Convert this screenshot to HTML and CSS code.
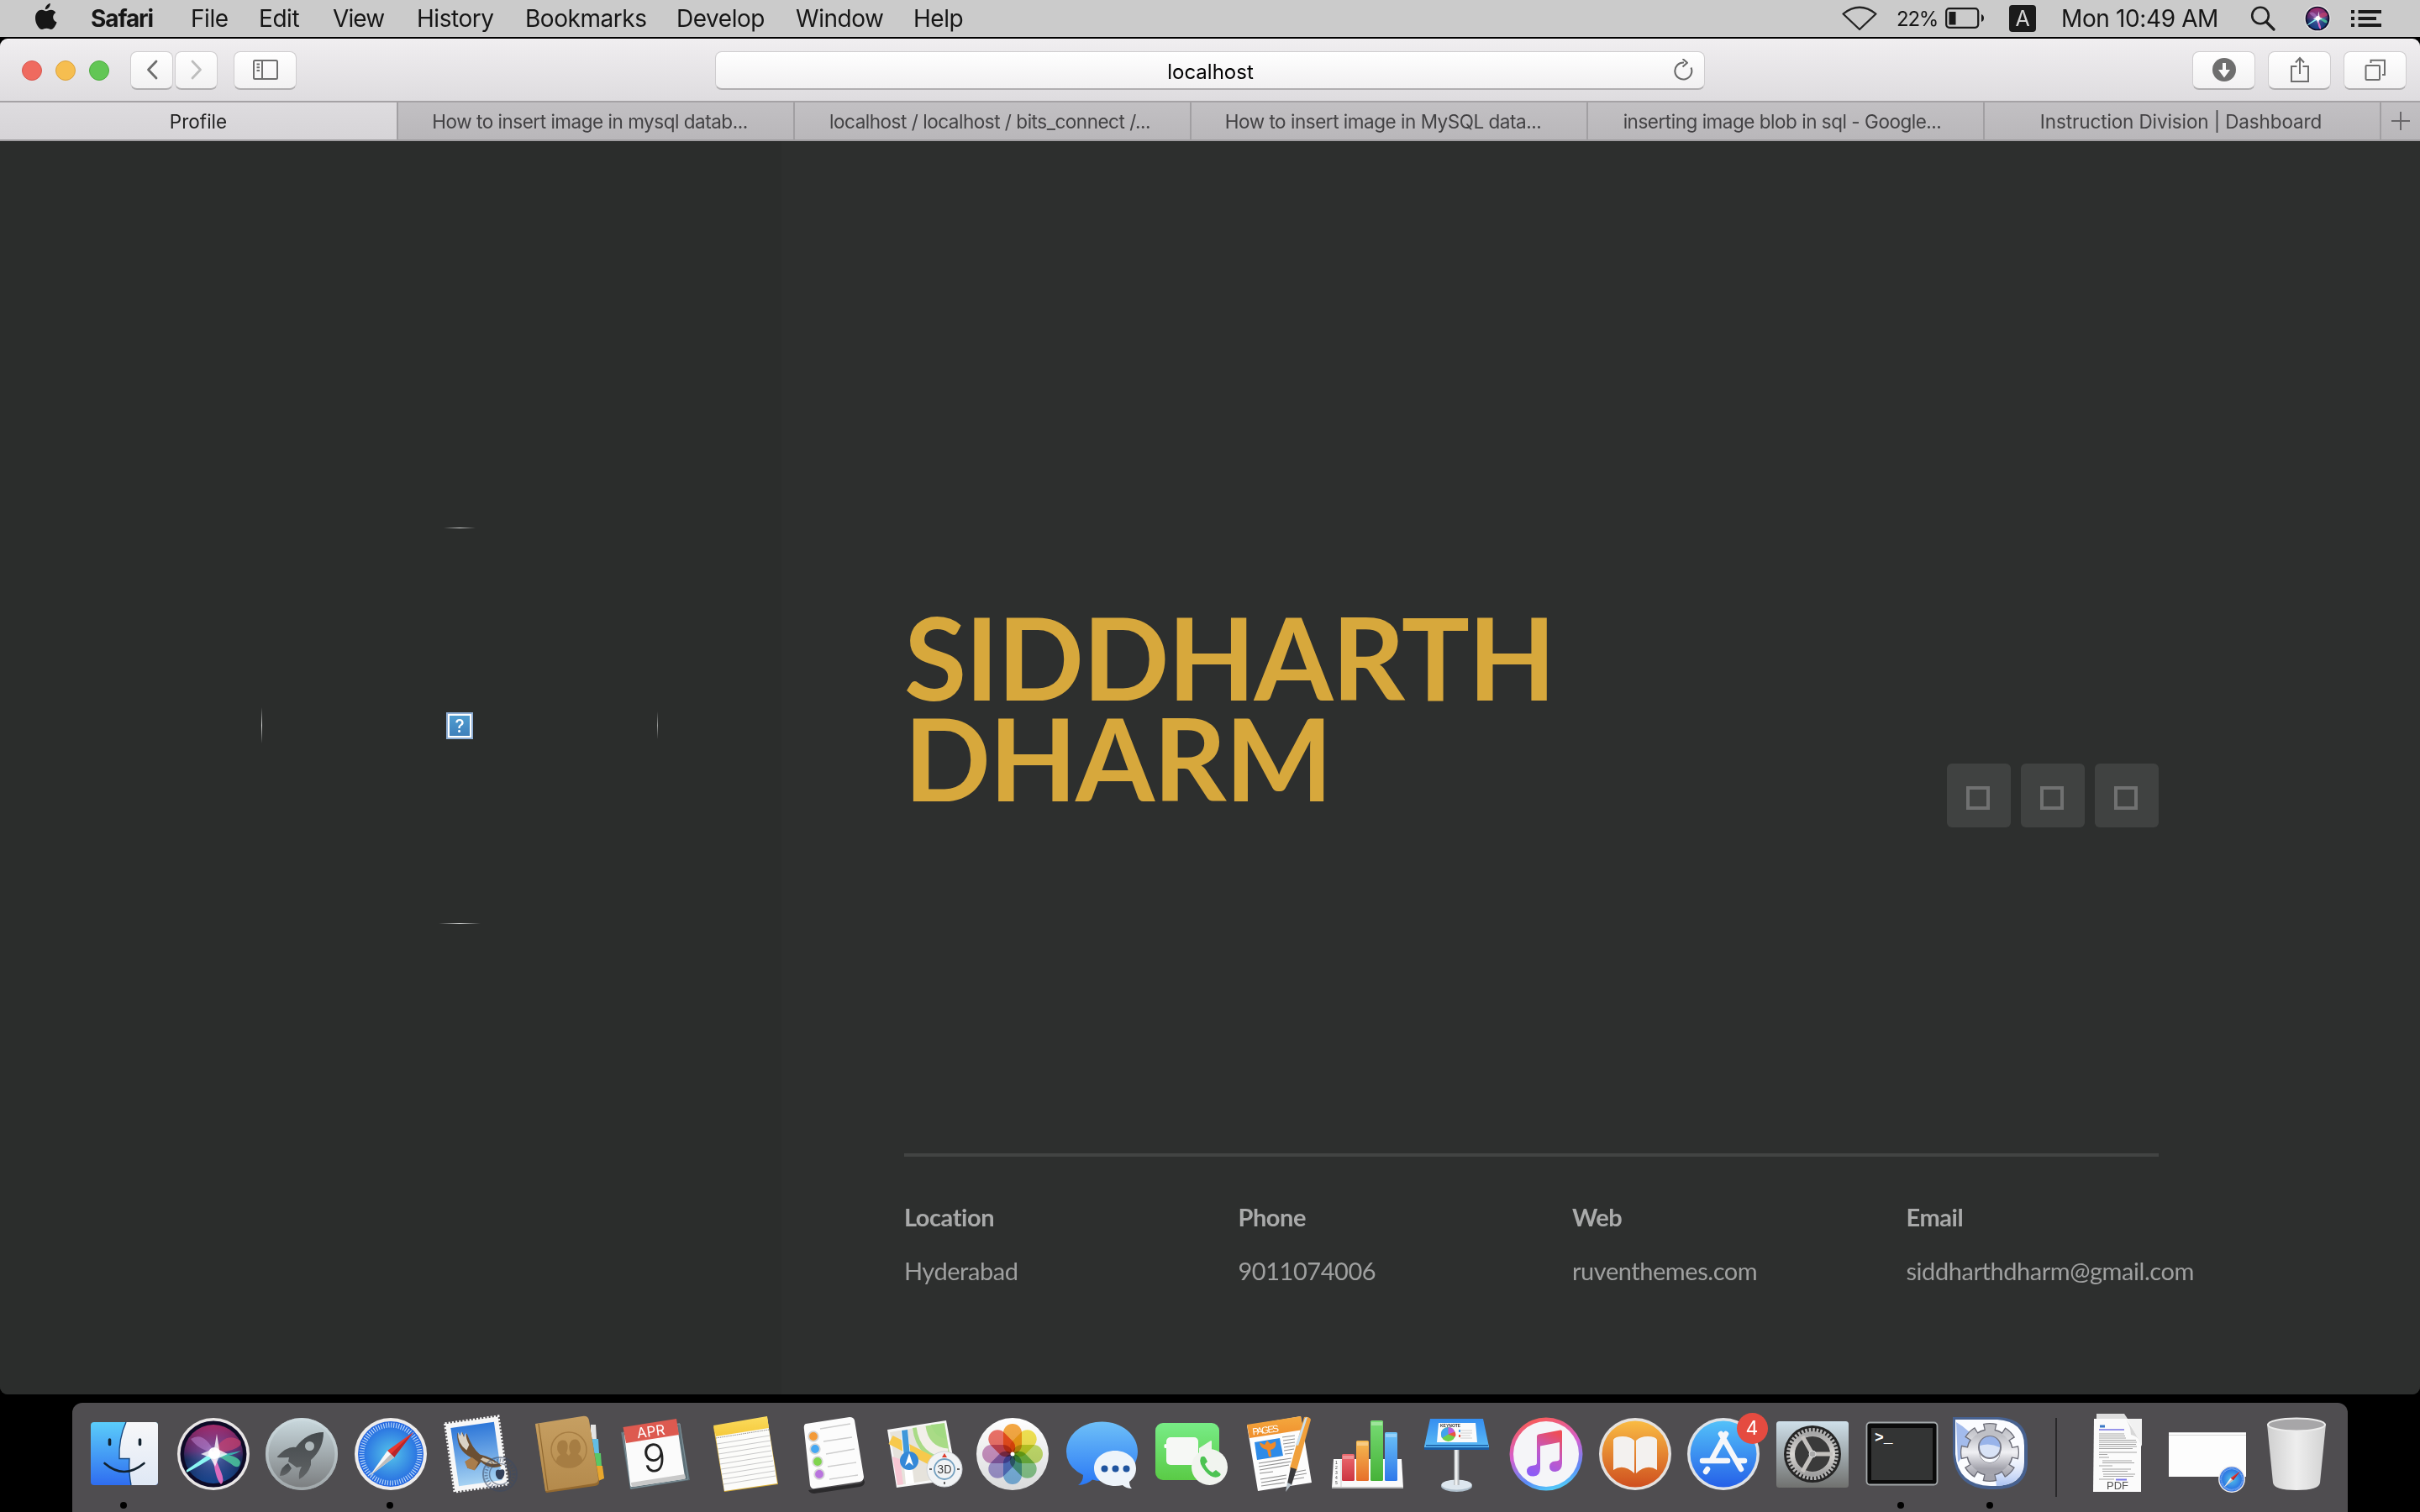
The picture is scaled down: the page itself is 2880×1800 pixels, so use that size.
FILE: index.html
```html
<!DOCTYPE html>
<html lang="en">
<head>
<meta charset="utf-8">
<title>Profile</title>
<link rel="stylesheet" href="styles.css">
</head>
<body>
<div class="desktop">
  <header class="menubar">
    <svg class="apple" width="26" height="32" viewBox="0 0 26 32"><path fill="#161616" d="M17.800 0C18 3.200 15.600 7 11.900 7.300 11.500 4.200 14.500.5 17.800 0zM12.900 9.300C14.200 9.300 16 7.700 18.800 7.700c1.900 0 4.100 1 5.500 3.200-4.600 2.700-4 9.500 1.300 11.600C24.300 26.200 21.600 31 18.800 31c-2 0-2.800-1.200-5.400-1.200S9.800 31 8 31C4.500 31 0 24 0 17.400 0 11 3.900 7.800 7.600 7.800c2.300 0 4 1.500 5.300 1.500z"/></svg>
    <nav class="menus">
      <span class="menu menu-app">Safari</span><span class="menu w-file">File</span><span class="menu w-edit">Edit</span><span class="menu w-view">View</span><span class="menu w-history">History</span><span class="menu w-bookmarks">Bookmarks</span><span class="menu w-develop">Develop</span><span class="menu w-window">Window</span><span class="menu w-help">Help</span>
    </nav>
    <div class="status">
      <svg class="st-wifi" width="42" height="30" viewBox="0 0 42 30" fill="none" stroke="#222" stroke-width="2.200" stroke-linejoin="round"><path d="M1.500 9.500Q21-6 40.500 9.500L21 28z"/></svg>
      <span class="st-pct">22%</span>
      <svg class="st-batt" width="47" height="26" viewBox="0 0 47 26"><rect x="1.200" y="1.200" width="38" height="22.600" rx="3.500" fill="none" stroke="#1a1a1a" stroke-width="2.200"/><rect x="4.500" y="5" width="8" height="15.500" fill="#1a1a1a"/><path d="M43 8q3 1 3 4.500T43 17z" fill="#1a1a1a"/></svg>
      <span class="st-input">A</span>
      <span class="st-clock">Mon 10:49 AM</span>
      <svg class="st-search" width="30" height="30" viewBox="0 0 30 30" fill="none" stroke="#1e1e1e" stroke-width="2.600" stroke-linecap="round"><circle cx="12" cy="11.500" r="9.800"/><path d="M19 19l9 9" stroke-width="3.200"/></svg>
      <svg class="st-siri" width="32" height="32" viewBox="6 6 88 88"><use href="#siri"/></svg>
      <svg class="st-list" width="36" height="22" viewBox="0 0 36 22" fill="#1a1a1a"><path d="M0 1h4v4H0zM0 9h4v4H0zM0 17h4v4H0zM8.500 1H36v4H8.500zM8.500 9H30v4H8.500zM8.500 17H36v4H8.500z"/></svg>
    </div>
  </header>

  <main class="window">
    <div class="toolbar">
      <div class="lights"><i class="light red"></i><i class="light yellow"></i><i class="light green"></i></div>
      <div class="navbtns">
        <button class="btn narrow"><svg width="14" height="24" viewBox="0 0 14 24" fill="none" stroke="#6e6e6e" stroke-width="2.800" stroke-linecap="round" stroke-linejoin="round"><path d="M12 2L2.500 12 12 22"/></svg></button>
        <button class="btn narrow"><svg width="14" height="24" viewBox="0 0 14 24" fill="none" stroke="#bdbdbd" stroke-width="2.800" stroke-linecap="round" stroke-linejoin="round"><path d="M2 2l9.500 10L2 22"/></svg></button>
      </div>
      <button class="btn"><svg width="30" height="24" viewBox="0 0 30 24" fill="none" stroke="#6e6e6e" stroke-width="2"><rect x="1" y="1" width="28" height="22" rx="1.500"/><path d="M11 1v22M4.500 5.500H8M4.500 9.200H8M4.500 13H8"/></svg></button>
      <div class="address"><span class="address-text">localhost</span>
        <svg class="reload" width="24" height="26" viewBox="0 0 24 26" fill="none" stroke="#6a6a6a" stroke-width="2.100"><path d="M21.500 10.500A10 10 0 1 1 13 4.500"/><path d="M11.500 0l5.500 4.700-5.500 4.800" stroke-linejoin="round"/></svg>
      </div>
      <div class="actions">
        <button class="btn"><svg width="28" height="28" viewBox="0 0 28 28"><circle cx="14" cy="14" r="14" fill="#6e6e6e"/><path d="M12 6h4v8h5l-7 9.500L7 14h5z" fill="#fafafa"/></svg></button>
        <button class="btn"><svg width="24" height="32" viewBox="0 0 24 32" fill="none" stroke="#6e6e6e" stroke-width="2"><path d="M8.500 12H2v18h20V12h-6.500M12 21V3M7 7.500L12 2l5 5.500"/></svg></button>
        <button class="btn"><svg width="26" height="26" viewBox="0 0 26 26" fill="none" stroke="#6e6e6e" stroke-width="2"><rect x="1.500" y="8" width="16.500" height="17" rx="1"/><path d="M7.500 5V1.800h16.500V19H21"/></svg></button>
      </div>
    </div>
    <div class="tabs">
      <div class="tab active"><span>Profile</span></div>
      <div class="tab cut shift-l"><span>How to insert image in mysql datab...</span></div>
      <div class="tab cut shift-s"><span>localhost / localhost / bits_connect /...</span></div>
      <div class="tab cut shift-l"><span>How to insert image in MySQL data...</span></div>
      <div class="tab cut shift-m"><span>inserting image blob in sql - Google...</span></div>
      <div class="tab full"><span>Instruction Division | Dashboard</span></div>
      <div class="newtab"><svg width="22" height="22" viewBox="0 0 22 22" stroke="#69676a" stroke-width="2"><path d="M11 0v22M0 11h22"/></svg></div>
    </div>
    <div class="page">
      <aside class="side">
        <svg class="photo" width="474" height="474" viewBox="0 0 474 474">
          <defs>
            <linearGradient id="fh"><stop offset="0" stop-color="#d4d6d5" stop-opacity="0"/><stop offset=".5" stop-color="#d4d6d5"/><stop offset="1" stop-color="#d4d6d5" stop-opacity="0"/></linearGradient>
            <linearGradient id="fv" x2="0" y2="1"><stop offset="0" stop-color="#d4d6d5" stop-opacity="0"/><stop offset=".5" stop-color="#d4d6d5"/><stop offset="1" stop-color="#d4d6d5" stop-opacity="0"/></linearGradient>
            <linearGradient id="qb" x2="0" y2="1"><stop stop-color="#4f9dd0"/><stop offset="1" stop-color="#3f80bb"/></linearGradient>
          </defs>
          <rect x="218" y="1" width="38" height="1" fill="url(#fh)"/>
          <rect x="212" y="472" width="50" height="1" fill="url(#fh)"/>
          <rect x="1" y="215" width="1" height="43" fill="url(#fv)"/>
          <rect x="472" y="220" width="1" height="33" fill="url(#fv)" opacity=".65"/>
          <rect x="221" y="221" width="32" height="32" fill="#8fafd6"/><rect x="223" y="223" width="28" height="28" fill="#fff"/><rect x="225" y="225" width="24" height="24" fill="url(#qb)"/>
          <text x="237" y="245" text-anchor="middle" class="qmark">?</text>
        </svg>
      </aside>
      <section class="profile">
        <div class="hero">
          <h1>SIDDHARTH<br>DHARM</h1>
          <div class="social"><a class="soc"><i></i></a><a class="soc"><i></i></a><a class="soc"><i></i></a></div>
        </div>
        <dl class="facts">
          <div><dt>Location</dt><dd>Hyderabad</dd></div>
          <div><dt>Phone</dt><dd>9011074006</dd></div>
          <div><dt>Web</dt><dd>ruventhemes.com</dd></div>
          <div><dt>Email</dt><dd>siddharthdharm@gmail.com</dd></div>
        </dl>
      </section>
    </div>
  </main>

  <footer class="dock">
    <svg class="defs" width="0" height="0">
      <defs>
        <linearGradient id="g-find" x2="0" y2="1"><stop stop-color="#5bcdfa"/><stop offset="1" stop-color="#2f6df0"/></linearGradient>
        <linearGradient id="g-white" x2="0" y2="1"><stop stop-color="#f7f7f9"/><stop offset="1" stop-color="#dfe8f5"/></linearGradient>
        <radialGradient id="g-siri" cx=".5" cy=".5" r=".5"><stop stop-color="#86c9ee"/><stop offset=".35" stop-color="#54508f"/><stop offset=".75" stop-color="#2b2658"/><stop offset="1" stop-color="#0c0b28"/></radialGradient>
        <linearGradient id="g-siri2" x2="0" y2="1"><stop stop-color="#e0357f"/><stop offset=".45" stop-color="#8b3b8f" stop-opacity=".7"/><stop offset=".6" stop-color="#1b5a9c" stop-opacity=".5"/><stop offset="1" stop-color="#1a5bb5"/></linearGradient>
        <linearGradient id="g-launch" x2="0" y2="1"><stop stop-color="#c7d6db"/><stop offset="1" stop-color="#7c7f81"/></linearGradient>
        <linearGradient id="g-rocket" x2="0" y2="1"><stop stop-color="#44494c"/><stop offset="1" stop-color="#606365"/></linearGradient>
        <radialGradient id="g-saf"><stop stop-color="#55c4ea"/><stop offset="1" stop-color="#2264e0"/></radialGradient>
        <linearGradient id="g-sky" x2="0" y2="1"><stop stop-color="#2e77d8"/><stop offset="1" stop-color="#a6d2f2"/></linearGradient>
        <linearGradient id="g-book" x2="0" y2="1"><stop stop-color="#c69f62"/><stop offset="1" stop-color="#b48a4c"/></linearGradient>
        <linearGradient id="g-note" x2="0" y2="1"><stop stop-color="#fbdc5e"/><stop offset="1" stop-color="#f5c93b"/></linearGradient>
        <linearGradient id="g-msg" x2="0" y2="1"><stop stop-color="#6ec0f8"/><stop offset="1" stop-color="#2a78f5"/></linearGradient>
        <linearGradient id="g-ft" x2="0" y2="1"><stop stop-color="#78ec86"/><stop offset="1" stop-color="#5acb46"/></linearGradient>
        <linearGradient id="g-or" x2="0" y2="1"><stop stop-color="#f4a93f"/><stop offset="1" stop-color="#f08e2c"/></linearGradient>
        <linearGradient id="g-bar1" x2="0" y2="1"><stop stop-color="#ec6a6f"/><stop offset="1" stop-color="#cc3541"/></linearGradient>
        <linearGradient id="g-bar2" x2="0" y2="1"><stop stop-color="#f4bb52"/><stop offset="1" stop-color="#e76f2a"/></linearGradient>
        <linearGradient id="g-bar3" x2="0" y2="1"><stop stop-color="#77db74"/><stop offset="1" stop-color="#46b238"/></linearGradient>
        <linearGradient id="g-bar4" x2="0" y2="1"><stop stop-color="#6cc3f7"/><stop offset="1" stop-color="#2e78ea"/></linearGradient>
        <linearGradient id="g-key" x2="0" y2="1"><stop stop-color="#358ef0"/><stop offset="1" stop-color="#5dbdf6"/></linearGradient>
        <linearGradient id="g-metal"><stop stop-color="#a9aeb2"/><stop offset=".4" stop-color="#fff"/><stop offset="1" stop-color="#9ba1a6"/></linearGradient>
        <linearGradient id="g-itr" x1=".3" y1="0" x2=".6" y2="1"><stop stop-color="#fb5c52"/><stop offset=".45" stop-color="#d45fd0"/><stop offset=".8" stop-color="#5c8cf8"/><stop offset="1" stop-color="#4fd0f8"/></linearGradient>
        <linearGradient id="g-itn" x1=".7" x2=".3" y2="1"><stop stop-color="#ee4d57"/><stop offset=".5" stop-color="#c158c9"/><stop offset="1" stop-color="#8d5cf5"/></linearGradient>
        <linearGradient id="g-ib" x2="0" y2="1"><stop stop-color="#f9bb43"/><stop offset="1" stop-color="#cf4f1f"/></linearGradient>
        <linearGradient id="g-as" x2="0" y2="1"><stop stop-color="#53c1f9"/><stop offset="1" stop-color="#2560e8"/></linearGradient>
        <linearGradient id="g-sp" x2="0" y2="1"><stop stop-color="#cfe0ea"/><stop offset="1" stop-color="#70716f"/></linearGradient>
        <linearGradient id="g-gear" x2="0" y2="1"><stop stop-color="#a8a8a8"/><stop offset=".5" stop-color="#d8d5d2"/><stop offset="1" stop-color="#a0a0a0"/></linearGradient>
        <linearGradient id="g-gear2" x2="0" y2="1"><stop stop-color="#bfc0c6"/><stop offset=".5" stop-color="#f0f0f4"/><stop offset="1" stop-color="#a3a3ac"/></linearGradient>
        <linearGradient id="g-auto" x2="0" y2="1"><stop stop-color="#fff" stop-opacity="0"/><stop offset="1" stop-color="#a9c1f2"/></linearGradient>
        <linearGradient id="g-trash"><stop stop-color="#cfcfcf"/><stop offset=".5" stop-color="#eeeeee"/><stop offset="1" stop-color="#d2d2d2"/></linearGradient>
        <linearGradient id="g-disc" x2="0" y2="1"><stop stop-color="#fff"/><stop offset="1" stop-color="#d9dadb"/></linearGradient>

        <g id="siri">
          <circle cx="50" cy="50" r="43" fill="#e9e6e6"/><circle cx="50" cy="50" r="39.500" fill="#0d0a26"/>
          <circle cx="50" cy="50" r="36" fill="url(#g-siri)"/><circle cx="50" cy="50" r="35" fill="url(#g-siri2)" opacity=".7"/>
          <path d="M23 32q16-10 28 16-18-2-28-16z" fill="#c08ad8" opacity=".5"/>
          <path d="M50 48Q64 22 82 34q6 10-32 16z" fill="#c8426e" opacity=".7"/>
          <path d="M50 50q30 0 32 10-1 8-8 4-9-7-24-14z" fill="#4fd1a0" opacity=".8"/>
          <path d="M48 50q10 2 35-4-12 8-32 7z" fill="#35cdbb" opacity=".8"/>
          <path d="M51 46L18 69q-1 4 2 2 10-5 31-18z" fill="#8af6f2"/>
          <path d="M49 50q3 30 10 36 5-3 0-15-4-9-8-21z" fill="#ee6fc2" opacity=".9"/>
          <path d="M50 49L54 26l3 19 10 5-11 5-4 10-6-11-11-4 12-5z" fill="#fff" opacity=".8"/>
          <circle cx="51" cy="49" r="7" fill="#fff" opacity=".95"/>
        </g>
        <g id="compass">
          <circle cx="50" cy="50" r="43" fill="#eeeceb"/><circle cx="50" cy="50" r="39" fill="url(#g-saf)"/>
          <circle cx="50" cy="50" r="34.500" fill="none" stroke="#d9efff" stroke-width="6" stroke-dasharray="1.100 1.910" opacity=".85"/>
          <path d="M77 24L46 46l8 8z" fill="#e8372f"/><path d="M77 24L50 50l4 4z" fill="#b9262a"/><path d="M25 76L46 46l8 8z" fill="#f7f7f7"/><path d="M25 76L50 50l4 4z" fill="#bdbdbd"/>
        </g>
      </defs>
    </svg>

    <div class="app running"><svg viewBox="0 0 100 100">
      <rect x="10" y="12" width="80" height="75" rx="4" fill="url(#g-find)"/>
      <path d="M52 12H86q4 0 4 4V83q0 4-4 4H58Q55 72 56 56H44Q42 32 52 12z" fill="url(#g-white)"/>
      <path d="M52 12Q43 32 44 55.500H56Q55 72 58 87" fill="none" stroke="#16477f" stroke-width="1.400"/>
      <path d="M32.500 33v5.500M68.500 33v5.500" stroke="#12222f" stroke-width="3.600" stroke-linecap="round"/><path d="M26.500 61q23 20 47 0" fill="none" stroke="#12222f" stroke-width="2.600" stroke-linecap="round"/>
    </svg></div>
    <div class="app"><svg viewBox="0 0 100 100"><use href="#siri"/></svg></div>
    <div class="app"><svg viewBox="0 0 100 100">
      <circle cx="50" cy="50" r="43" fill="#d7e4e8"/><circle cx="50" cy="50" r="43" fill="url(#g-launch)" opacity=".6"/><circle cx="50" cy="50" r="39.500" fill="url(#g-launch)"/>
      <path d="M76 24Q56 24 43 42 33 40 21 53q-2 2 14 1l-1 5 6 4 4 3 6-1q-4 6-3 15 10-5 14-17l0-6Q76 44 76 24z" fill="url(#g-rocket)"/><circle cx="59.500" cy="40.500" r="5.500" fill="#aeb8bb"/><path d="M34 61q-9 4-10 15 9 0 14-9z" fill="url(#g-rocket)"/>
    </svg></div>
    <div class="app running"><svg viewBox="0 0 100 100"><use href="#compass"/></svg></div>
    <div class="app"><svg viewBox="0 0 100 100">
      <g transform="rotate(-8 46 50)"><rect x="14" y="9" width="64" height="82" fill="none" stroke="#f7f7f7" stroke-width="3" stroke-dasharray="2.200 2"/><rect x="14.500" y="9.500" width="63" height="81" fill="#f7f7f7"/><rect x="20" y="15" width="52" height="70" fill="url(#g-sky)"/>
      <path d="M27 22q-4 20 12 31l-6 12 9 3 8-8q10 12 24 8-10-12-24-17Q42 43 38 24l-3 5-2-7-2 5z" fill="#6b4f33"/><path d="M28 21q-3 13 7 23l4-6Q36 30 37 23l-3 5-2-7-2 5z" fill="#d9d2c6"/><path d="M33 65l-2-8 9-4 7 7-6 9z" fill="#a97d4c"/><path d="M50 57q8 8 20 8-8-6-17-10z" fill="#d0c3ae"/></g>
      <g fill="none" stroke="#3c4a63" opacity=".55"><circle cx="74" cy="74" r="20" stroke-width="2"/><circle cx="74" cy="74" r="12.500" stroke-width="1.500"/><circle cx="74" cy="74" r="16.500" stroke-width="4" stroke-dasharray="1.500 2"/></g><path d="M74 69q7-3 5 6-2 6-5 5-3 1-5-5-1-8 5-6z" fill="#34415a"/>
    </svg></div>
    <div class="app"><svg viewBox="0 0 100 100">
      <path d="M76 15h6l1 18h-7z" fill="#e4e4e4"/><path d="M77 32h8l1 17h-8z" fill="#63bde4"/><path d="M79 49h9l1 15h-9z" fill="#59c765"/><path d="M80 64h10l2 15-9 4z" fill="#e8a72d"/>
      <path d="M10 15L66 6q7-1 8 5L86 82q1 5-5 6L24 96q-2 0-2-3z" fill="#94692f"/><path d="M10 14L66 5q7-1 8 5L85 79q1 5-5 6L22 94z" fill="url(#g-book)"/><path d="M14 14L25 93" stroke="#8f672f" stroke-width="1.200"/>
      <ellipse cx="50" cy="45" rx="21" ry="21" fill="none" stroke="#a67d43" stroke-width="1.500"/><path d="M35 59q0-6 5-8-6-6-3-14 3-5 9-3 5 5 1 15l3 3 2-3q-4-9 1-15 7-4 10 3 3 8-2 13 5 3 5 8-6 8-17 8-11-1-14-7z" fill="#a67d43"/>
    </svg></div>
    <div class="app"><svg viewBox="0 0 100 100">
      <path d="M7 24l70-11 12 68-71 11z" fill="#5d7078"/><path d="M9 25l68-11 10 66-68 11z" fill="none" stroke="#82939a"/>
      <path d="M11 27L74 17l9 60q0 3-3 3L20 89q-2 0-2-3z" fill="#fbfbfb"/><path d="M19 84l64-10 1 4q0 2-3 2l-59 9q-3 0-3-5z" fill="#c9c9c9"/><path d="M9.500 18L73 8l3 19-63 10z" fill="#dd5a50"/>
      <text x="43" y="29" class="cal-m" transform="rotate(-8 43 26)">APR</text><text x="47" y="71" class="cal-d" transform="rotate(-5 47 60)">9</text>
    </svg></div>
    <div class="app"><svg viewBox="0 0 100 100">
      <path d="M11 18l64-11 13 79-64 9z" fill="#d7ac32"/><path d="M12 18l63-11 12 78-63 9z" fill="#fcfcfa"/><path d="M11 16L75 5l2 14-63 10z" fill="url(#g-note)"/><path d="M14 31l63-10" stroke="#8c8c8c" stroke-dasharray="1.500 1"/>
      <path d="M15 38l63-10M16 44l63-10M17 50l62-10M18 56l62-10M19 62l62-10M20 68l62-10M21 74l62-10M22 80l62-10M23 86l62-10" stroke="#c9c9c9" stroke-width="1"/>
    </svg></div>
    <div class="app"><svg viewBox="0 0 100 100">
      <path d="M18 93l61-8q5-1 4-6l2 4q0 5-6 6l-54 8q-5 0-7-4z" fill="#2b2a2c"/><path d="M15 14L67 6q5 0 6 4L84 77q0 5-5 6L26 91q-5 1-6-4L13 21q-1-6 2-7z" fill="#fcfcfc"/>
      <g stroke="#d5d5d5" stroke-width="1.800"><circle cx="24" cy="29" r="5.800" fill="#f39a38"/><circle cx="26" cy="44" r="5.800" fill="#46a8f3"/><circle cx="29" cy="59" r="5.800" fill="#7fd44d"/><circle cx="31" cy="74" r="5.800" fill="#b974de"/></g>
      <path d="M32 20l36-6M36 35l34-5M39 50l34-6M41 65l34-5M43 80l34-5" stroke="#cdcdcd" stroke-width="1.300"/>
    </svg></div>
    <div class="app"><svg viewBox="0 0 100 100">
      <path d="M6 21l70-11 13 70-72 10z" fill="#f7f7f7"/><path d="M9 24l65-11 10 64-65 10z" fill="#e6e3dc"/>
      <path d="M36 19l38-6 9 55Q40 56 36 19z" fill="#a9db86"/><path d="M46 17q4 30 32 32" fill="none" stroke="#f2efe9" stroke-width="11"/><path d="M58 15q4 14 18 17l-3-18z" fill="#a2da82"/>
      <path d="M10 33l72 37" stroke="#f7c94c" stroke-width="11"/><path d="M12 53l9 3 4 30-7 1z" fill="#f8c7d4"/><path d="M22 22l8-1 8 64-10 1z" fill="#fff"/><path d="M23 22l7-1 3 32-7 1z" fill="#4098da"/>
      <circle cx="32" cy="58" r="11" fill="#3488d8"/><path d="M32 49l5 15-5-4-5 4z" fill="#fff"/>
      <circle cx="74" cy="68" r="21" fill="#f1f3f5" stroke="#d0d4d8"/><circle cx="74" cy="68" r="12" fill="none" stroke="#74a0bf" stroke-width="1.800"/><path d="M74 49l3 5h-6z" fill="#dd3d2e"/><path d="M74 83v3M56 68h3M89 68h3" stroke="#333" stroke-width="1.500"/><text x="74" y="72.500" class="map-t">3D</text>
    </svg></div>
    <div class="app"><svg viewBox="0 0 100 100">
      <circle cx="50" cy="50" r="43" fill="url(#g-disc)"/>
      <g class="petals"><rect x="39" y="14" width="22" height="36" rx="11" fill="#f6a02e"/><rect x="39" y="14" width="22" height="36" rx="11" fill="#f3e23f" transform="rotate(45 50 50)"/><rect x="39" y="14" width="22" height="36" rx="11" fill="#bfdc5c" transform="rotate(90 50 50)"/><rect x="39" y="14" width="22" height="36" rx="11" fill="#7fc783" transform="rotate(135 50 50)"/><rect x="39" y="14" width="22" height="36" rx="11" fill="#72b3e6" transform="rotate(180 50 50)"/><rect x="39" y="14" width="22" height="36" rx="11" fill="#9a8fd0" transform="rotate(225 50 50)"/><rect x="39" y="14" width="22" height="36" rx="11" fill="#c888bd" transform="rotate(270 50 50)"/><rect x="39" y="14" width="22" height="36" rx="11" fill="#ee6458" transform="rotate(315 50 50)"/></g><circle cx="50" cy="50" r="2.500" fill="#fff"/>
    </svg></div>
    <div class="app"><svg viewBox="0 0 100 100">
      <path d="M50.500 11.500C74 11.500 93 27 93 47S74 82 50 82q-6 0-11-1.500Q32 87 22 87q6-4 6-12Q8 65 8 47C8 27 27 11.500 50.500 11.500z" fill="url(#g-msg)"/>
      <path d="M66 46c14 0 25 9 25 21 0 7-3 12-8 16q0 5 3 8-7 0-11-4-4 1-9 1c-14 0-25-9-25-21s11-21 25-21z" fill="#eef4fa"/><circle cx="53.500" cy="67.500" r="4" fill="#1f549f"/><circle cx="66.500" cy="67.500" r="4" fill="#1f549f"/><circle cx="79.500" cy="67.500" r="4" fill="#1f549f"/>
    </svg></div>
    <div class="app"><svg viewBox="0 0 100 100">
      <rect x="8" y="13" width="76" height="68" rx="9" fill="url(#g-ft)"/><rect x="18.500" y="38" width="3" height="5" rx="1.500" fill="#fff"/><rect x="21" y="30" width="38" height="33" rx="5" fill="#f6f8f5"/><path d="M60 43l14-9q1 0 1 1v22L60 52z" fill="#eef3ec"/>
      <circle cx="72.500" cy="65.500" r="21.500" fill="#f1f4ef"/><path d="M62 54q4-3 6 1l2 4-3 3q3 7 9 10l4-3 5 4q2 2-2 4-7 3-15-6-9-10-6-17z" fill="#4cc352"/>
    </svg></div>
    <div class="app"><svg viewBox="0 0 100 100">
      <path d="M11 16L75 5l13 79-64 10z" fill="#fdfdfd"/><path d="M11 15L75 5l3 16-64 10z" fill="url(#g-or)"/><text x="18" y="27.500" class="pg-t" transform="rotate(-8 18 27)">PAGES</text>
      <path d="M20 36l30-5 4 21-31 5z" fill="#2e8be8"/><path d="M37 53l-2-8q-9-2-9-9l6 3 3-5 4 4 6-3q2 8-6 10l1 8z" fill="#ef8a2a"/>
      <path d="M53 30l15-2M54 34l14-2M54 38l14-2M55 42l13-2M55 46l12-2M56 50l9-1M25 61l39-6M25 65l38-6M26 69l35-6M26 73l16-2M27 80l31-5M28 84l30-5M28 88l28-4M66 72l15-3M65 76l17-3M66 80l13-2" stroke="#929292" stroke-width="1.200"/>
      <path d="M79 6q6-1 8 3L70 70l-8-3z" fill="#f0a03b"/><path d="M80 7l3-1-11 34-3-1z" fill="#c9e0f0"/><path d="M63 66l7 2-6 19-5-2z" fill="#39393b"/><path d="M59 84l5 2-7 9z" fill="#b9c4cc"/>
    </svg></div>
    <div class="app"><svg viewBox="0 0 100 100">
      <path d="M9 56h81l2 34H7z" fill="#fafafa"/><path d="M7 89h85v2H7z" fill="#bdbdbd"/><g class="num-t"><text x="11" y="62">1</text><text x="11" y="68">2</text><text x="11" y="74">3</text><text x="11" y="80">4</text><text x="11" y="86">5</text></g>
      <path d="M18 57v32" stroke="#d0d0d0"/><rect x="19" y="50" width="15" height="32" rx="1.500" fill="url(#g-bar1)"/><rect x="36" y="34" width="15" height="48" rx="1.500" fill="url(#g-bar2)"/><rect x="53" y="10" width="15" height="72" rx="1.500" fill="url(#g-bar3)"/><rect x="70" y="24" width="15" height="58" rx="1.500" fill="url(#g-bar4)"/><path d="M20 52h13v4H20zM37 36h13v4H37zM54 12h13v4H54zM71 26h13v4H71z" fill="#fff" opacity=".3"/>
    </svg></div>
    <div class="app"><svg viewBox="0 0 100 100">
      <ellipse cx="49.500" cy="88" rx="18.500" ry="7" fill="#aebecb"/><ellipse cx="49.500" cy="86.500" rx="18" ry="6" fill="#dde6ee"/><rect x="46.500" y="44" width="6" height="43" fill="url(#g-metal)"/>
      <path d="M18 8h63l7 33v3H11v-3z" fill="url(#g-key)"/><path d="M13 39h74v1.500H13zM11 42h77v3H11z" fill="#1a5da4"/><path d="M28 13h44l2 23H26z" fill="#fbfbfb"/><text x="30" y="17.500" class="key-t">KEYNOTE</text><circle cx="39.500" cy="26.500" r="8.500" fill="#6fcf4b"/><path d="M39.500 26.500L32 31q-4-11 7.500-13z" fill="#41a3ee"/><path d="M39.500 26.500V18q6 0 8 6z" fill="#c05be0"/><path d="M39.500 26.500l8-3q2 4 0 6z" fill="#ec5342"/><path d="M54 22h14M54 25h14M54 28h12M54 31h14" stroke="#d0d0d0"/><path d="M53 21v3" stroke="#41a3ee" stroke-width="2"/><path d="M53 27v3" stroke="#ec5342" stroke-width="2"/>
    </svg></div>
    <div class="app"><svg viewBox="0 0 100 100">
      <circle cx="50" cy="50" r="43.500" fill="url(#g-itr)"/><circle cx="50" cy="50" r="39" fill="#f5f5f8"/>
      <path d="M39 29q0-2 2-2.500L67 21.500q2-.3 2 2V61q0 9-8 10-7 0-7-6 0-6 7-6.500 5 0 5-3V36L43 40.500V67q0 9-8 9.500-8 0-8-6 0-6.500 8-7 4 0 4-3z" fill="url(#g-itn)"/>
    </svg></div>
    <div class="app"><svg viewBox="0 0 100 100">
      <circle cx="50" cy="50" r="43" fill="#e4e1df"/><circle cx="50" cy="50" r="39.500" fill="url(#g-ib)"/><path d="M49 34q-5-5-14-5-9 0-11 4v36q12-8 25 4zM51 34q5-5 14-5 9 0 11 4v36q-12-8-25 4z" fill="#f3f1ef"/>
    </svg></div>
    <div class="app"><svg viewBox="0 0 100 100">
      <circle cx="50" cy="50" r="43" fill="#dfe2e6"/><circle cx="50" cy="50" r="39.500" fill="url(#g-as)"/><g stroke="#f6f7fa" stroke-width="6.500" stroke-linecap="round" fill="none"><path d="M53 26L36 57M47 26l24 42M25 58h30M66 58h9M31 68l-2 3"/></g></svg><span class="badge">4</span></div>
    <div class="app"><svg viewBox="0 0 100 100">
      <rect x="7" y="11" width="86" height="79" rx="3.500" fill="url(#g-sp)"/><circle cx="50" cy="50" r="34" fill="#252525"/><circle cx="50" cy="50" r="28.500" fill="none" stroke="#b5b5b5" stroke-width="5" stroke-dasharray="2.600 1.876"/><circle cx="50" cy="50" r="24" fill="#3a3a3a" stroke="url(#g-gear)" stroke-width="6"/><path d="M50 50h24M50 50L38 29M50 50L38 71" stroke="#c4c1be" stroke-width="5"/><circle cx="50" cy="50" r="4" fill="#aaa" stroke="#ddd"/>
    </svg></div>
    <div class="app running"><svg viewBox="0 0 100 100">
      <rect x="8.500" y="12.500" width="84" height="74" rx="4" fill="#0b0b0b" stroke="#a4a9ab" stroke-width="1.800"/><rect x="14" y="19" width="73" height="62" fill="#333434"/><text x="18" y="36" class="term-t">&gt;_</text>
    </svg></div>
    <div class="app running"><svg viewBox="0 0 100 100">
      <path d="M5 6H60Q94 8 94 40V62Q92 92 55 92H48Q8 90 5 50z" fill="#47618f"/><path d="M8 9H58Q90 11 90 40V60Q89 88 55 88H50Q11 87 8 50z" fill="#fbfcff"/><path d="M9 12q17 10 23 22L11 60z" fill="#a3bbec"/><path d="M50 40h40v20q-1 26-33 28z" fill="url(#g-auto)"/>
      <g fill="none" stroke="#6c6d78"><circle cx="49" cy="48" r="28" stroke-width="14" stroke-dasharray="13.600 8.392" stroke-dashoffset="6.800"/><circle cx="49" cy="48" r="20" stroke-width="16"/></g>
      <g fill="none" stroke="url(#g-gear2)"><circle cx="49" cy="48" r="28" stroke-width="11.500" stroke-dasharray="11.200 10.792" stroke-dashoffset="5.600"/><circle cx="49" cy="48" r="19.500" stroke-width="14"/></g>
      <circle cx="49" cy="42" r="13" fill="#d9e3f7" stroke="#777885" stroke-width="2"/><path d="M37 40a12 12 0 0 1 24 2q-12-6-24-2z" fill="#98b3ea"/>
    </svg></div>
    <i class="separator"></i>
    <div class="app pdf"><svg viewBox="0 0 100 100">
      <path d="M25 2h33l4 6H25z" fill="#dedede"/><path d="M22 8h48l8 24v63H21z" fill="#fbfbfb"/><path d="M60 8l18 28q-5-8-12-9 0-9-6-19z" fill="#d7d7d7"/><path d="M62 8h17v33z" fill="#f1f1f1"/><path d="M29 17h6" stroke="#3b78c6" stroke-width="3"/><path d="M28 21h30" stroke="#8d8ae8" stroke-width="1.800"/><g stroke="#a5a5a5" stroke-width="1.200"><path d="M28 26h30M28 28.500h31M28 31h32M28 33.500h44M28 36h45M28 38.500h44M28 41h45M28 43.500h40M28 48h45M28 50.500h10M28 54h12M32 58h35M32 60.500h38M28 64h16M32 68h34M32 70.500h30M33 74h38M33 76.500h36M28 80h18"/></g><path d="M48 80.500h13" stroke="#7d7be8" stroke-width="2"/><text x="50" y="91.500" class="pdf-t">PDF</text>
    </svg></div>
    <div class="app"><svg viewBox="0 0 100 100"><rect x="5" y="24" width="92" height="53" fill="#fdfdfd"/><path d="M5 24.500h92M5 27.500h92" stroke="#d8d8d8"/><g transform="translate(61.500 61.500) scale(.37)"><use href="#compass"/></g></svg></div>
    <div class="app"><svg viewBox="0 0 100 100">
      <path d="M16 14L23 84q1 9 28 9t28-9l7-70z" fill="url(#g-trash)"/><ellipse cx="51" cy="15" rx="34" ry="7.500" fill="#a7a6a8" stroke="#ececec" stroke-width="2"/>
    </svg></div>
  </footer>
</div>
</body>
</html>
```
FILE: styles.css
```css
* { box-sizing: border-box; }
body { margin: 0; background: #000; font-family: Inter, "Liberation Sans", sans-serif; }
.desktop { width: 2880px; height: 1800px; overflow: hidden; background: #000; display: flex; flex-direction: column; }

.menubar { height: 44px; flex: none; margin-bottom: 2px; background: #cbcbcb; display: flex; align-items: center; padding: 0 46px 0 42px; color: #161616; font-size: 28px; letter-spacing: -.45px; }
.apple { flex: none; margin: -4px 40px 0 0; }
.menus { display: flex; gap: 38px; line-height: 44px; }
.menu { white-space: nowrap; }
.menu-app { width: 81px; font-weight: 700; letter-spacing: -1.100px; }
.w-file { width: 43px; } .w-edit { width: 50px; } .w-view { width: 62px; letter-spacing: -.9px; } .w-history { width: 91px; } .w-bookmarks { width: 142px; } .w-develop { width: 104px; } .w-window { width: 102px; } .w-help { width: 58px; }
.status { margin-left: auto; display: flex; align-items: center; white-space: nowrap; }
.st-wifi { margin-right: 23px; }
.st-pct { width: 47px; font-size: 24px; letter-spacing: -1.200px; margin-right: 11px; }
.st-batt { margin-right: 29px; }
.st-input { width: 32px; height: 32px; border-radius: 4px; background: #1b1b1b; color: #d5d5d5; font-size: 25px; line-height: 32px; text-align: center; margin-right: 30px; }
.st-clock { width: 187px; letter-spacing: -.38px; margin-right: 38px; }
.st-search { margin-right: 34px; }
.st-siri { margin-right: 24px; }

.window { height: 1614px; flex: none; border-radius: 9px; overflow: hidden; display: flex; flex-direction: column; background: #2d2f2e; }
.toolbar { height: 76px; flex: none; display: flex; align-items: center; padding: 0 16px 0 26px; background: linear-gradient(#f0eef0, #dedcdf); border-top: 1px solid #f8f7f8; border-bottom: 2px solid #a5a2a5; }
.lights { display: flex; gap: 16px; margin-right: 25px; }
.light { width: 24px; height: 24px; border-radius: 50%; border: 1px solid; }
.red { background: #ef6a5f; border-color: #d85750; } .yellow { background: #f6be50; border-color: #dba23c; } .green { background: #62c655; border-color: #4dac40; }
.navbtns { display: flex; gap: 2px; margin-right: 19px; }
.btn { width: 75px; height: 46px; padding: 0; border: 1px solid #cfcdcf; border-bottom: 2px solid #b1afb1; border-radius: 8px; background: linear-gradient(#fff, #f2f1f2); display: flex; align-items: center; justify-content: center; }
.narrow { width: 51px; }
.address { width: 1178px; height: 46px; margin-left: 498px; border: 1px solid #cfcdcf; border-bottom: 2px solid #b1afb1; border-radius: 8px; background: linear-gradient(#fff, #f1f0f1); display: flex; align-items: center; justify-content: flex-end; padding-right: 13px; font-size: 24px; color: #000; }
.address-text { flex: 1; text-align: center; padding: 4px 0 0 38px; }
.actions { display: flex; gap: 15px; margin-left: auto; }
.tabs { height: 46px; flex: none; display: flex; border-bottom: 2px solid #9f9da0; background: linear-gradient(#c2c0c3, #b9b7ba); }
.tab { width: 472px; border-right: 2px solid #a19fa2; display: flex; justify-content: center; align-items: center; font-size: 22.500px; color: #434244; white-space: nowrap; }
.tab.active { width: 474px; background: linear-gradient(#dedcdf, #d6d4d7); color: #1f1f1f; }
.cut { letter-spacing: -.48px; }
.full { letter-spacing: -.12px; padding-right: 3px; }
.shift-l { padding-right: 14px; }
.shift-s { padding-right: 6px; }
.shift-m { padding-right: 8px; }
.newtab { flex: 1; display: flex; align-items: center; justify-content: center; }

.page { flex: 1; display: flex; font-family: Lato, "Liberation Sans", sans-serif; }
.side { width: 930px; flex: none; background: #2b2d2c; padding: 459px 0 0 310px; }
.photo { display: block; }
.qmark { font: 500 21px Inter, sans-serif; fill: #fff; }
.profile { flex: none; width: 1950px; padding: 563px 311px 0 146px; background: #2d2f2e; }
.hero { height: 646px; border-bottom: 4px solid #424443; display: flex; justify-content: space-between; }
h1 { margin: -9px 0 0; font-size: 135.500px; line-height: 120px; letter-spacing: -1.700px; font-weight: 700; color: #d7a83c; }
.social { display: flex; gap: 12px; padding-top: 178px; }
.soc { width: 76px; height: 76px; border-radius: 6px; background: #404241; padding: 27px 0 0 23px; }
.soc i { display: block; width: 28px; height: 28px; border: 4px solid #707171; }
.facts { margin: 0; display: grid; grid-template-columns: repeat(4, 397.500px); font-size: 29px; line-height: 40px; letter-spacing: -.45px; font-variant-ligatures: none; padding-top: 52px; white-space: nowrap; }
.facts dt { font-weight: 700; color: #a9aaaa; }
.facts dd { margin: 24px 0 0; color: #9f a0a0; color: #9fa0a0; }

.dock { position: relative; width: 2708px; height: 130px; margin: 10px 0 0 86px; border-radius: 12px 12px 0 0; background: #4f4d50; display: flex; padding: 11px 0 0 9px; }
.defs { position: absolute; }
.app { position: relative; width: 105.750px; flex: none; display: flex; justify-content: center; }
.app svg { width: 100px; height: 100px; display: block; }
.running::after { content: ""; position: absolute; top: 107px; left: 48px; width: 8px; height: 8px; border-radius: 50%; background: #000; }
.badge { position: absolute; left: 68px; top: 1px; width: 37px; height: 37px; border-radius: 50%; background: #e54b40; color: #fff; font-size: 23px; line-height: 37px; text-align: center; }
.separator { width: 2px; height: 94px; margin: 7px 20px 0 24px; background: #29282a; }
.petals rect { mix-blend-mode: multiply; opacity: .9; }
.cal-m { font: 400 17px Inter, sans-serif; fill: #fff; text-anchor: middle; }
.cal-d { font: 300 46px Inter, sans-serif; fill: #222; text-anchor: middle; }
.map-t { font: 400 13px Inter, sans-serif; fill: #333; text-anchor: middle; }
.pg-t { font: 400 11.500px "Liberation Sans", sans-serif; fill: #fff; letter-spacing: -1.800px; }
.num-t { font: 5px "Liberation Sans", sans-serif; fill: #444; }
.key-t { font: 700 5px "Liberation Sans", sans-serif; fill: #333; }
.term-t { font: 700 18px "Liberation Mono", monospace; fill: #fff; }
.pdf-t { font: 400 13px "Liberation Sans", sans-serif; fill: #555; text-anchor: middle; }
```
